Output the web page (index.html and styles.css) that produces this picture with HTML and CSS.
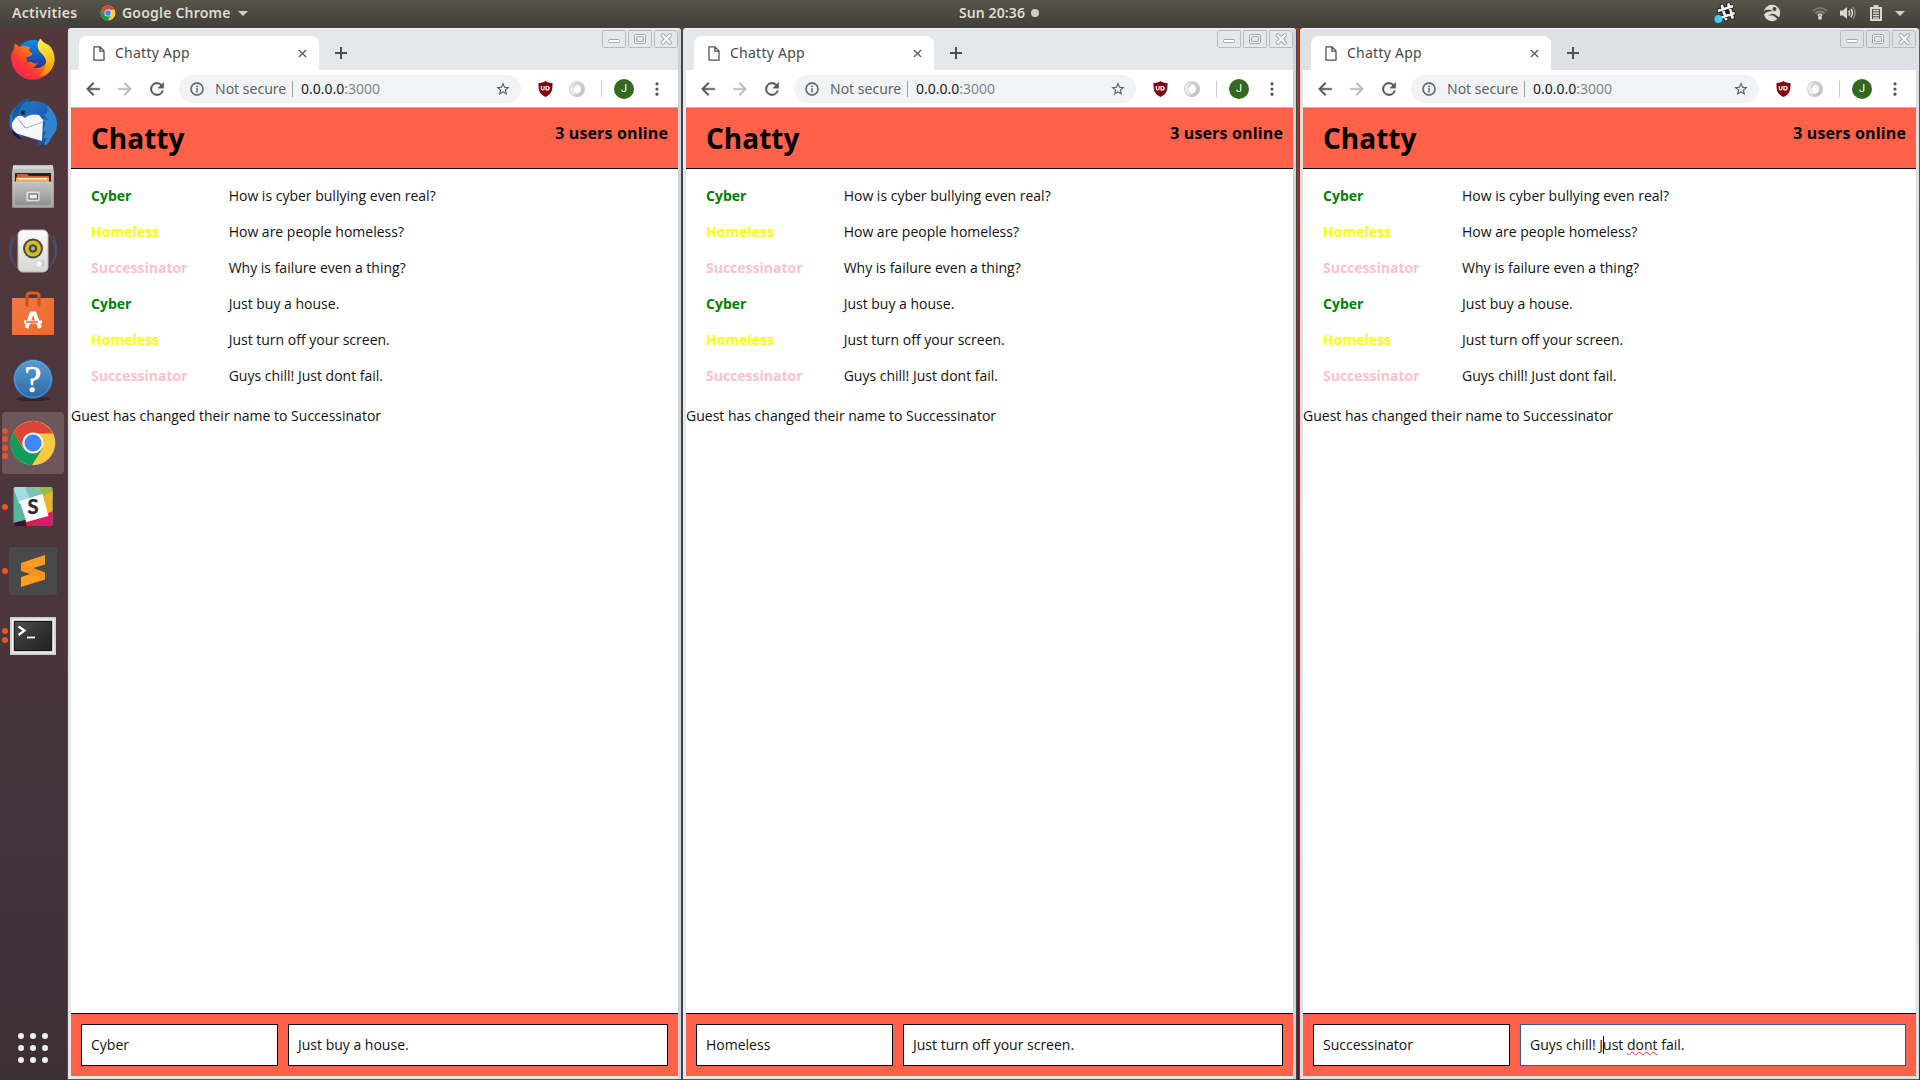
FILE: index.html
```html
<!DOCTYPE html>
<html lang="en">
<head>
<meta charset="utf-8">
<title>Chatty App</title>
<link rel="stylesheet" href="styles.css">
</head>
<body>
<svg class="defs" width="0" height="0">
  <defs>
    <linearGradient id="gFox" x1="0" y1="1" x2="1" y2="0"><stop offset="0" stop-color="#f5156c"/><stop offset=".35" stop-color="#ff3b30"/><stop offset=".65" stop-color="#ff9a0a"/><stop offset="1" stop-color="#ffe226"/></linearGradient>
    <linearGradient id="gTail" x1="0" y1="0" x2="0" y2="1"><stop offset="0" stop-color="#fff44f"/><stop offset=".5" stop-color="#ffc81e"/><stop offset="1" stop-color="#ff8a0a"/></linearGradient>
    <linearGradient id="gGlobe" x1="0" y1="0" x2="0" y2="1"><stop offset="0" stop-color="#0a8df0"/><stop offset="1" stop-color="#2a1f7a"/></linearGradient>
    <linearGradient id="gBird" x1="0" y1="0" x2="1" y2="1"><stop offset="0" stop-color="#1d84c9"/><stop offset=".5" stop-color="#1f62b8"/><stop offset="1" stop-color="#1b4a9c"/></linearGradient>
    <linearGradient id="gGrey" x1="0" y1="0" x2="0" y2="1"><stop offset="0" stop-color="#c4c4c4"/><stop offset="1" stop-color="#8f8f8f"/></linearGradient>
    <linearGradient id="gWhite" x1="0" y1="0" x2="0" y2="1"><stop offset="0" stop-color="#fbfbfb"/><stop offset="1" stop-color="#d6d6d4"/></linearGradient>
    <linearGradient id="gBag" x1="0" y1="0" x2="1" y2="1"><stop offset="0" stop-color="#ee7b45"/><stop offset="1" stop-color="#f0672a"/></linearGradient>
    <linearGradient id="gHelp" x1="0" y1="0" x2="0" y2="1"><stop offset="0" stop-color="#5b9bd0"/><stop offset="1" stop-color="#2b68a6"/></linearGradient>
    <linearGradient id="gTerm" x1="0" y1="0" x2="1" y2="1"><stop offset="0" stop-color="#505050"/><stop offset=".5" stop-color="#333"/><stop offset="1" stop-color="#222"/></linearGradient>
    <linearGradient id="gRing" x1="0" y1="0" x2="1" y2="1"><stop offset="0" stop-color="#dcdcdc"/><stop offset="1" stop-color="#bdbdbd"/></linearGradient>
    <symbol id="chrome" viewBox="0 0 48 48">
      <circle cx="24" cy="24" r="22.3" fill="#fbc93d"/>
      <path d="M4.7 12.8A22.3 22.3 0 0 0 23 46.2L33.6 29.2 24 24 14 29.5Z" fill="#0f9d58"/>
      <path d="M4.7 12.8 14.3 29.5 24 14.500H43.8A22.3 22.3 0 0 0 4.700 12.800Z" fill="#db4437"/>
      <circle cx="24" cy="24" r="10.6" fill="#f4f4f4"/><circle cx="24" cy="24" r="8.5" fill="#4285f4"/>
    </symbol>
    <symbol id="doc" viewBox="0 0 12 15"><path d="M1 .9h6l4 4v9.2H1ZM6.9 1v4.1H11" fill="none" stroke="#505357" stroke-width="1.3"/></symbol>
    <symbol id="cross" viewBox="0 0 10 10"><path d="m1 1 8 8M9 1 1 9" stroke="#5f6368" stroke-width="1.6"/></symbol>
    <symbol id="plus" viewBox="0 0 12 12"><path d="M6 0v12M0 6h12" stroke="#4c5054" stroke-width="2"/></symbol>
    <symbol id="back" viewBox="0 0 24 24"><path d="M20 11H7.8l5.6-5.6L12 4l-8 8 8 8 1.4-1.4L7.8 13H20Z" stroke-width=".5"/></symbol>
    <symbol id="reload" viewBox="0 0 24 24"><path d="M17.65 6.35A8 8 0 1 0 19.73 14h-2.08A6 6 0 1 1 12 6c1.66 0 3.14.69 4.22 1.78L13 11h7V4Z" fill="#54585c" stroke="#54585c" stroke-width=".5"/></symbol>
    <symbol id="info" viewBox="0 0 24 24"><path d="M11 17h2v-6h-2ZM12 2a10 10 0 1 0 0 20 10 10 0 0 0 0-20Zm0 18a8 8 0 1 1 0-16 8 8 0 0 1 0 16ZM11 9h2V7h-2Z" fill="#5f6368" stroke="#5f6368" stroke-width=".4"/></symbol>
    <symbol id="star" viewBox="0 0 24 24"><path d="m22 9.24-7.19-.62L12 2 9.19 8.63 2 9.24l5.46 4.73L5.82 21 12 17.27 18.18 21l-1.63-7.03ZM12 15.4l-3.76 2.27 1-4.28-3.32-2.88 4.38-.38L12 6.1l1.71 4.04 4.38.38-3.32 2.88 1 4.28Z" fill="#54585c"/></symbol>
    <symbol id="shield" viewBox="0 0 15 16"><path d="M7.5 0C9.5 1.5 12 2 14.5 2 14.6 9 14 13 7.5 16 1 13 .4 9 .5 2 3 2 5.500 1.500 7.500 0Z" fill="#800610"/><path d="M3.300 5v2.500q0 1.500 1.400 1.500t1.400-1.500V5M8 5.500v3.500h1.200q2 0 2-1.750t-2-1.750Z" fill="none" stroke="#fff" stroke-width="1.200"/></symbol>
    <symbol id="ring" viewBox="0 0 16 16"><circle cx="8" cy="8" r="8" fill="url(#gRing)"/><path d="M8.500 3.500c2.500 1 3.500 2.500 3.500 4.500s-1.500 4-4.500 5C5.500 12 4.500 10.500 4.500 8.500S6 4.500 8.500 3.500Z" fill="#fff"/><path d="M1 8a7 7 0 0 1 6-6.800C4 3 3.500 5 4 8s1 5 3 6.800A7 7 0 0 1 1 8Z" fill="#ececec"/></symbol>
    <symbol id="dots" viewBox="0 0 4 14"><circle cx="2" cy="1.800" r="1.600" fill="#505357"/><circle cx="2" cy="7" r="1.600" fill="#505357"/><circle cx="2" cy="12.200" r="1.600" fill="#505357"/></symbol>
    <symbol id="wmin" viewBox="0 0 24 18"><rect x=".5" y=".5" width="23" height="17" rx="1" fill="none" stroke="#b7bbbf"/><rect x="6.500" y="9.500" width="11" height="3" rx="1" fill="#fff" stroke="#a5a8ab"/></symbol>
    <symbol id="wmax" viewBox="0 0 24 18"><rect x=".5" y=".5" width="23" height="17" rx="1" fill="none" stroke="#b7bbbf"/><rect x="6.500" y="4.500" width="11" height="9" rx="1.500" fill="#f8f8f8" stroke="#a5a8ab"/><rect x="8.500" y="6.500" width="7" height="5" rx=".5" fill="#e4e7ea" stroke="#a5a8ab"/></symbol>
    <symbol id="wclose" viewBox="0 0 24 18"><path d="M.5 1.500q0-1 1-1H20q3.500 0 3.500 3.500v12.500q0 1-1 1h-21q-1 0-1-1Z" fill="none" stroke="#b7bbbf"/><path d="m8.700 5.200 7.200 7.600m0-7.600-7.200 7.600" stroke="#a5a8ab" stroke-width="4.200" stroke-linecap="round"/><path d="m8.700 5.200 7.200 7.600m0-7.600-7.200 7.600" stroke="#fff" stroke-width="2.200" stroke-linecap="round"/></symbol>
  </defs>
</svg>

<header class="topbar">
  <span class="activities">Activities</span>
  <svg class="app-icon"><use href="#chrome"/></svg>
  <span class="app-name">Google Chrome</span>
  <i class="caret"></i>
  <div class="clock"><span>Sun 20:36</span><i></i></div>
  <div class="tray">
    <svg class="tray-slack" width="22" height="22" viewBox="0 0 22 22"><g stroke="#222" stroke-width="4.600" stroke-linecap="round"><path d="m8 4 4 13M14.500 2.500l4 13M5 8.500l13-4M7 15.500l12.500-4"/></g><g stroke="#f5f5f5" stroke-width="2.800" stroke-linecap="round"><path d="m8 4 4 13M14.500 2.500l4 13M5 8.500l13-4M7 15.500l12.500-4"/></g><path d="m10.800 8.200 4-1.200 1.300 4-4 1.200Z" fill="#222"/><circle cx="4.500" cy="17" r="4" fill="#38d0f5"/></svg>
    <svg class="tray-cam" width="18" height="18" viewBox="0 0 18 18"><circle cx="9" cy="9" r="8.200" fill="#dedcd6"/><path d="M.5 7.500C3 5.500 5.500 4.800 8 6l2 1.500C6.500 6.800 3 8 1 10.500ZM5 12q4-3.500 7-1.500l5 3.500-1.500 2-4-3.500Q8.500 10.500 5 12Z" fill="#45443d"/><circle cx="11.500" cy="5" r="2" fill="#45443d"/></svg>
    <svg class="tray-wifi" width="16" height="14" viewBox="0 0 16 14"><g fill="none" stroke-width="1.800"><path d="M1 5.200C5 .7 11 .7 15 5.200" stroke="#77756f"/><path d="M3.500 7.500C6 4.600 10 4.600 12.500 7.500" stroke="#8d8b85"/><path d="M5.800 9.500q2.200-2.200 4.400 0" stroke="#d9d7d2"/></g><circle cx="8" cy="11.800" r="2" fill="#d9d7d2"/></svg>
    <svg class="tray-vol" width="16" height="14" viewBox="0 0 16 14"><path d="M0 4.500h3L7 1v12L3 9.500H0Z" fill="#d9d7d2"/><path d="M8.800 4.500q1.700 2.500 0 5M10.800 2.800q3.200 4.200 0 8.400" stroke="#d9d7d2" stroke-width="1.500" fill="none"/><path d="M12.800 1q4.500 6 0 12" stroke="#85837d" stroke-width="1.500" fill="none"/></svg>
    <svg class="tray-bat" width="12" height="16" viewBox="0 0 12 16"><path d="M3.500 0h5v2H12v14H0V2h3.500Z" fill="#d9d7d2"/><path d="M2 4h8v10H2Z" fill="#4b4a43"/><path d="M3 5.500h6M3 8h6M3 10.500h6M3 13h6" stroke="#d9d7d2" stroke-width="1.300"/></svg>
    <i class="caret"></i>
  </div>
</header>

<div class="desktop">
  <nav class="dock">
    <div class="dock-item"><svg viewBox="0 0 48 48"><circle cx="24" cy="22" r="17" fill="url(#gGlobe)"/><path d="M6 8.500Q9 11 11 12q4-2 10 .5l-1.500 3.500q3 .5 4 3.500-2 2-6 2.500 0 3 1 5.500 3-1.500 5 0t5.500.5q-1.500 3-5.500 4.200 8 2.600 13-3.700Q40 21 32 14q-4-5-1-10.500Q33 7 40 10q6 6 5.700 15.500A21.800 21.800 0 0 1 2.500 26Q1 19 5 14 5 11 6 8.500Z" fill="url(#gFox)"/><path d="M31.500 3.500Q34 8 40 11.500 46 18 45 28 42 40 30 41q8-7 7-15-1-5-6-9-5-7 .5-13.500Z" fill="url(#gTail)"/></svg></div>
    <div class="dock-item"><svg viewBox="0 0 48 48"><path d="M21 0q-3 2-3 3Q30 0 38 6q9 7 10 18 .5 8-6 15-1 4-5 7l-2-1-7 2 2-5L13 37q-3 0-3 3-6-4-9-12Q-2 14 8 7 13 0 21 0Z" fill="url(#gBird)"/><path d="M21 0q-9 5-11 13l-2 9Q-1 19 8 7 13 0 21 0Z" fill="#165aa0"/><path d="M38 6q9 7 10 18 .5 8-6 15-1 4-5 7l-2-1 3-6-4 1 3-8-3 1 2-9-3-4 6 1-4-6q5 0 3-9Z" fill="#3283cd"/><path d="M7 18q5-3 9 1 5-5 14-3l4 5-1 21L6 34Q2 28 3 24Z" fill="#f7f7f7"/><path d="m7 18 10 11 17-6M11 22l5 7" fill="none" stroke="#aaa" stroke-width=".9"/><path d="M3 30q0 8 10 11l-3-4Z" fill="#241456"/><circle cx="14" cy="13.500" r="2.500" fill="#123c70"/><circle cx="14" cy="13.500" r="1" fill="#111"/></svg></div>
    <div class="dock-item"><svg viewBox="0 0 48 48"><path d="M4 3q0-1 1-1h38q1 0 1 1l1 6v36H3V9Z" fill="url(#gGrey)"/><path d="M4 3h40v3H4Z" fill="#d5d5d5"/><path d="M6 10h36v9H6Z" fill="#2c2622"/><path d="M8 11h10l2 2h20v6H8Z" fill="#d55f20"/><path d="M7 14.500h33V19H7Z" fill="#f4a257"/><path d="M9 15h29v1.500H9Z" fill="#fff3e0"/><path d="M5 19h38v24H5Z" fill="url(#gGrey)" stroke="#ccc" stroke-width=".8"/><rect x="17" y="28" width="14" height="10.500" rx="1.500" fill="#dedede" stroke="#aaa"/><rect x="20" y="31" width="8.500" height="5" fill="#ededed" stroke="#555"/></svg></div>
    <div class="dock-item"><svg viewBox="0 0 48 48"><g fill="none" stroke="#4c4c68" stroke-width="1.500"><path d="M8 8q-12 15-1 32M4 8q-7 15 0 28M40 8q12 15 1 32M44 8q7 15 0 28"/></g><rect x="9" y="3" width="30" height="42" rx="5" fill="url(#gWhite)" stroke="#bcbcbc"/><circle cx="24" cy="21.500" r="10" fill="#494844"/><circle cx="24" cy="21.500" r="8" fill="#d8bb20"/><circle cx="24" cy="21.500" r="4.300" fill="#4f502f"/><circle cx="24" cy="21.500" r="2" fill="#a2b2c2"/><circle cx="30" cy="37" r="3.500" fill="#f5f5f5" stroke="#ccc"/><path d="M34 33v7" stroke="#bbb"/></svg></div>
    <div class="dock-item"><svg viewBox="0 0 48 48"><path d="M18 14V5q0-3 3-3h6q3 0 3 3v9" fill="none" stroke="#dc5924" stroke-width="3"/><path d="M3 7h42v37H3Z" fill="url(#gBag)"/><path d="M18 7v7M30 7v7" stroke="#c8501d" stroke-width="3" stroke-linecap="round"/><path d="m17.500 37 5-14.500h3l5.500 14.500" fill="none" stroke="#fff" stroke-width="4"/><rect x="15" y="29.500" width="18" height="3" fill="#fff"/><path d="M17 31h12" stroke="#ef6a2f" stroke-width="1.600"/></svg></div>
    <div class="dock-item"><svg viewBox="0 0 48 48"><ellipse cx="24" cy="44" rx="17" ry="2" fill="#33252b"/><circle cx="24" cy="24" r="19.500" fill="url(#gHelp)" stroke="#24588f"/><circle cx="24" cy="24" r="18.300" fill="none" stroke="#76a9d6" stroke-width=".7"/><text x="24" y="37" text-anchor="middle" class="help-mark">?</text></svg></div>
    <div class="dock-item active"><span class="pips"><i></i><i></i><i></i><i></i></span><svg><use href="#chrome"/></svg></div>
    <div class="dock-item"><span class="pips"><i></i></span><svg viewBox="0 0 48 48"><clipPath id="cs"><rect x="4.500" y="4" width="39" height="39" rx="2"/></clipPath><g clip-path="url(#cs)"><path d="M0 0h48v48H0Z" fill="#54b898"/><path d="M4 4h27l3 9-24 8Z" fill="#a3dce2"/><path d="M16 4h14l3 10-12 3Z" fill="#7fc3b0"/><path d="M30 4h14v12l-10 3Z" fill="#98bd47"/><path d="m33 13 11-5v22l-7 2Z" fill="#ecb32e"/><path d="m37 31 7-3v16H30l-2-8Z" fill="#e01765"/><path d="m16 37 12-4 4 11H16Z" fill="#d91c50"/><path d="M4 40l12-3 2 8H4Z" fill="#3b1530"/><path d="m10.500 18 23-7 6 22-22 6Z" fill="#fff"/></g><text x="24" y="31" text-anchor="middle" class="slack-mark">S</text></svg></div>
    <div class="dock-item"><span class="pips"><i></i></span><svg viewBox="0 0 48 48"><rect width="48" height="48" rx="2" fill="#494949"/><path d="m12 16 24-8v9.500l-15 4.500L36 27v5.500l-24 7.500V30l14-4.500L12 21Z" fill="#ff9c22"/><path d="m12 16 24 9.500V32L12 24Z" fill="#f7931e"/></svg></div>
    <div class="dock-item"><span class="pips"><i></i><i></i></span><svg viewBox="0 0 48 48"><path d="M1 6h46v38H1Z" fill="#d3d3d1"/><path d="M3 8h42v34H3Z" fill="#f0f0ef"/><path d="M4.500 9.500h39v31h-39Z" fill="#999"/><path d="M5.500 10.500h37v29h-37Z" fill="url(#gTerm)" stroke="#191919"/><path d="m9.500 15.500 6 4-6 4.500" fill="none" stroke="#fff" stroke-width="2.200"/><path d="M18 26.500h8" stroke="#fff" stroke-width="1.800"/></svg></div>
    <div class="apps"><i></i><i></i><i></i><i></i><i></i><i></i><i></i><i></i><i></i></div>
  </nav>

  <section class="window w1">
    <div class="tabs">
      <div class="tab"><svg class="doc"><use href="#doc"/></svg><span>Chatty App</span><svg class="x"><use href="#cross"/></svg></div>
      <svg class="plus"><use href="#plus"/></svg>
      <div class="controls"><svg><use href="#wmin"/></svg><svg><use href="#wmax"/></svg><svg><use href="#wclose"/></svg></div>
    </div>
    <div class="toolbar">
      <svg class="nav"><use href="#back"/></svg><svg class="nav fwd"><use href="#back"/></svg><svg class="nav"><use href="#reload"/></svg>
      <div class="omnibox"><svg class="info"><use href="#info"/></svg><span class="secure">Not secure</span><span class="url">0.0.0.0<em>:3000</em></span><svg class="star"><use href="#star"/></svg></div>
      <svg class="shield"><use href="#shield"/></svg><svg class="ring"><use href="#ring"/></svg><i class="sep"></i><b class="avatar">J</b><svg class="dots"><use href="#dots"/></svg>
    </div>
    <div class="page">
      <div class="navbar"><h1>Chatty</h1><p>3 users online</p></div>
      <main>
        <div class="message"><b class="green">Cyber</b><span>How is cyber bullying even real?</span></div>
        <div class="message"><b class="yellow">Homeless</b><span>How are people homeless?</span></div>
        <div class="message"><b class="pink">Successinator</b><span>Why is failure even a thing?</span></div>
        <div class="message"><b class="green">Cyber</b><span>Just buy a house.</span></div>
        <div class="message"><b class="yellow">Homeless</b><span>Just turn off your screen.</span></div>
        <div class="message"><b class="pink">Successinator</b><span>Guys chill! Just dont fail.</span></div>
        <div class="system">Guest has changed their name to Successinator</div>
      </main>
      <footer><div class="field name">Cyber</div><div class="field text">Just buy a house.</div></footer>
    </div>
  </section>

  <section class="window w2">
    <div class="tabs">
      <div class="tab"><svg class="doc"><use href="#doc"/></svg><span>Chatty App</span><svg class="x"><use href="#cross"/></svg></div>
      <svg class="plus"><use href="#plus"/></svg>
      <div class="controls"><svg><use href="#wmin"/></svg><svg><use href="#wmax"/></svg><svg><use href="#wclose"/></svg></div>
    </div>
    <div class="toolbar">
      <svg class="nav"><use href="#back"/></svg><svg class="nav fwd"><use href="#back"/></svg><svg class="nav"><use href="#reload"/></svg>
      <div class="omnibox"><svg class="info"><use href="#info"/></svg><span class="secure">Not secure</span><span class="url">0.0.0.0<em>:3000</em></span><svg class="star"><use href="#star"/></svg></div>
      <svg class="shield"><use href="#shield"/></svg><svg class="ring"><use href="#ring"/></svg><i class="sep"></i><b class="avatar">J</b><svg class="dots"><use href="#dots"/></svg>
    </div>
    <div class="page">
      <div class="navbar"><h1>Chatty</h1><p>3 users online</p></div>
      <main>
        <div class="message"><b class="green">Cyber</b><span>How is cyber bullying even real?</span></div>
        <div class="message"><b class="yellow">Homeless</b><span>How are people homeless?</span></div>
        <div class="message"><b class="pink">Successinator</b><span>Why is failure even a thing?</span></div>
        <div class="message"><b class="green">Cyber</b><span>Just buy a house.</span></div>
        <div class="message"><b class="yellow">Homeless</b><span>Just turn off your screen.</span></div>
        <div class="message"><b class="pink">Successinator</b><span>Guys chill! Just dont fail.</span></div>
        <div class="system">Guest has changed their name to Successinator</div>
      </main>
      <footer><div class="field name">Homeless</div><div class="field text">Just turn off your screen.</div></footer>
    </div>
  </section>

  <section class="window w3">
    <div class="tabs">
      <div class="tab"><svg class="doc"><use href="#doc"/></svg><span>Chatty App</span><svg class="x"><use href="#cross"/></svg></div>
      <svg class="plus"><use href="#plus"/></svg>
      <div class="controls"><svg><use href="#wmin"/></svg><svg><use href="#wmax"/></svg><svg><use href="#wclose"/></svg></div>
    </div>
    <div class="toolbar">
      <svg class="nav"><use href="#back"/></svg><svg class="nav fwd"><use href="#back"/></svg><svg class="nav"><use href="#reload"/></svg>
      <div class="omnibox"><svg class="info"><use href="#info"/></svg><span class="secure">Not secure</span><span class="url">0.0.0.0<em>:3000</em></span><svg class="star"><use href="#star"/></svg></div>
      <svg class="shield"><use href="#shield"/></svg><svg class="ring"><use href="#ring"/></svg><i class="sep"></i><b class="avatar">J</b><svg class="dots"><use href="#dots"/></svg>
    </div>
    <div class="page">
      <div class="navbar"><h1>Chatty</h1><p>3 users online</p></div>
      <main>
        <div class="message"><b class="green">Cyber</b><span>How is cyber bullying even real?</span></div>
        <div class="message"><b class="yellow">Homeless</b><span>How are people homeless?</span></div>
        <div class="message"><b class="pink">Successinator</b><span>Why is failure even a thing?</span></div>
        <div class="message"><b class="green">Cyber</b><span>Just buy a house.</span></div>
        <div class="message"><b class="yellow">Homeless</b><span>Just turn off your screen.</span></div>
        <div class="message"><b class="pink">Successinator</b><span>Guys chill! Just dont fail.</span></div>
        <div class="system">Guest has changed their name to Successinator</div>
      </main>
      <footer><div class="field name">Successinator</div><div class="field text focused">Guys chill! J<i class="cursor"></i>ust <u>dont</u> fail.</div></footer>
    </div>
  </section>
</div>
</body>
</html>
```
FILE: styles.css
```css
* { box-sizing: border-box; }
body {
  margin: 0;
  width: 1920px;
  height: 1080px;
  overflow: hidden;
  display: flex;
  flex-direction: column;
  font-family: "Noto Sans", "Open Sans", sans-serif;
  background: #3f3036;
}
.defs { position: absolute; }
svg { display: block; flex: none; }

/* Top panel */
.topbar {
  height: 28px;
  flex: none;
  display: grid;
  grid-template-columns: auto auto auto auto 1fr auto;
  align-items: center;
  padding: 0 15px 2px 12px;
  background: linear-gradient(#57534a, #403f39);
  color: #dfdbd2;
  font-weight: 600;
  font-size: 14px;
  line-height: 24px;
}
.activities { width: 88px; letter-spacing: .3px; }
.app-icon { width: 16px; height: 16px; }
.app-name { margin-left: 6px; width: 111px; letter-spacing: .2px; white-space: nowrap; }
.caret { border: 5px solid transparent; border-top-color: #d3d0c9; border-bottom: 0; }
.app-name + .caret { margin-left: 5px; }
.clock { display: flex; align-items: center; margin-left: 711px; }
.clock span { width: 67px; letter-spacing: .1px; white-space: nowrap; }
.clock i { width: 8px; height: 8px; border-radius: 50%; background: #d0cdc7; margin-left: 5px; }
.tray { display: flex; align-items: center; }
.tray-cam { margin-left: 27px; }
.tray-wifi { margin-left: 31px; }
.tray-vol { margin-left: 12px; }
.tray-bat { margin-left: 14px; }
.tray .caret { margin-left: 13px; }

.desktop {
  flex: 1;
  display: flex;
  min-height: 0;
  background: linear-gradient(#b03a1c, #6d1228);
}

/* Dock */
.dock {
  width: 68px;
  flex: none;
  display: flex;
  flex-direction: column;
  gap: 2.05px;
  padding-left: 2px;
  background: linear-gradient(#53373b, #4b363c 50%, #41323a 85%, #3c3034);
  box-shadow: inset -1px 0 #4a4a4c;
}
.dock-item {
  width: 62px;
  height: 62px;
  flex: none;
  display: grid;
  grid-template: 1fr / 7px 48px 7px;
  align-items: center;
}
.dock-item > svg { width: 48px; height: 48px; grid-column: 2; grid-row: 1; }
.dock-item.active { background: #6d575d; border-radius: 4px; }
.pips { display: grid; gap: 2.5px; grid-column: 1; grid-row: 1; }
.pips i { width: 6px; height: 6px; border-radius: 50%; background: #e95420; }
.help-mark { font: 38px "Liberation Serif", serif; fill: #fff; stroke: #fff; stroke-width: .6px; }
.slack-mark { font: bold 20px "Lato", sans-serif; fill: #2b2b35; stroke: #2b2b35; stroke-width: .5px; }
.apps {
  margin: auto 0 17px 16px;
  display: grid;
  grid-template-columns: repeat(3, 6px);
  gap: 6px;
}
.apps i { width: 6px; height: 6px; border-radius: 50%; background: #f2f0ef; }

/* Browser windows */
.window {
  --frame: #e4e8eb;
  display: flex;
  flex-direction: column;
  flex: none;
  width: 613px;
  padding: 0 3px 3px;
  background: var(--frame);
  border-bottom: 1px solid #55555a;
  border-radius: 4px 4px 0 0;
}
.w1 { box-shadow: inset 0 1px #f1f3f4, inset -3px 0 #d0d3d6, 2px 0 #424349; }
.w2 { margin-left: 2px; box-shadow: inset 0 1px #f1f3f4, inset -3px 0 #d0d3d6, 1px 0 #424349; }
.w3 { --frame: #dde1e6; margin-left: 4px; width: 619px; box-shadow: inset 0 1px #f1f3f4, -1px 0 #424349; }
.tabs { height: 42px; flex: none; display: flex; align-items: flex-end; }
.tab {
  margin-left: 8px;
  width: 240px;
  height: 34px;
  border-radius: 8px 8px 0 0;
  background: #fff;
  display: flex;
  align-items: center;
  padding: 0 12px 0 14px;
  color: #45494d;
  font-size: 14px;
}
.doc { width: 12px; height: 15px; }
.tab span { flex: 1; margin-left: 10px; letter-spacing: .25px; padding-bottom: 2px; }
.x { width: 9px; height: 9px; }
.plus { width: 12px; height: 12px; margin: 0 0 11px 16px; }
.controls { display: flex; gap: 2px; margin-left: auto; align-self: flex-start; padding-top: 2px; }
.controls svg { width: 24px; height: 18px; }
.toolbar {
  height: 38px;
  flex: none;
  display: flex;
  align-items: center;
  background: #fff;
  border-bottom: 1px solid #b5b5b5;
  padding: 0 19px 0 12px;
}
.nav { width: 20px; height: 20px; margin-right: 12px; fill: #54585c; stroke: #54585c; }
.fwd { transform: scaleX(-1); fill: #b9bbbd; stroke: #b9bbbd; }
.omnibox {
  flex: 1;
  height: 28px;
  border-radius: 14px;
  background: #f1f3f4;
  display: flex;
  align-items: center;
  padding: 0 10px;
  font-size: 14px;
  color: #5f6368;
}
.info { width: 16px; height: 16px; }
.secure { margin-left: 10px; width: 78px; border-right: 1px solid #9b9ea2; line-height: 16px; white-space: nowrap; }
.url { margin-left: 8px; flex: 1; color: #202124; }
.url em { font-style: normal; color: #80868b; }
.star { width: 16px; height: 16px; }
.shield { width: 15px; height: 16px; margin-left: 17px; }
.ring { width: 16px; height: 16px; margin-left: 16px; }
.sep { width: 1px; height: 16px; background: #c8cacc; margin-left: 16px; }
.avatar {
  width: 20px; height: 20px; border-radius: 50%;
  margin-left: 12px; background: #33691e; color: #fff;
  font: 11px/20px Roboto, sans-serif; text-align: center;
}
.dots { width: 4px; height: 14px; margin-left: 21px; }

/* Chat page */
.page {
  flex: 1;
  display: flex;
  flex-direction: column;
  background: #fff;
  color: #111;
  font: 14px/20px "Open Sans", "Noto Sans", sans-serif;
}
.navbar {
  height: 61px;
  flex: none;
  display: flex;
  justify-content: space-between;
  background: #ff6249;
  border-bottom: 1px solid #000;
  padding: 0 10px 0 20px;
  color: #000;
}
.navbar h1 { margin: 10px 0 0; font-size: 28px; line-height: 40px; }
.navbar p { margin: 13px 0 0; font-size: 16px; line-height: 24px; font-weight: 700; letter-spacing: .15px; }
main { flex: 1; padding-top: 9px; }
.message { display: flex; height: 36px; line-height: 36px; padding-left: 20px; }
.message b { width: 23.45%; }
.green { color: green; }
.yellow { color: yellow; }
.pink { color: pink; }
.system { margin-top: 12px; }
footer {
  height: 63px;
  flex: none;
  display: flex;
  gap: 10px;
  padding: 10px;
  background: #ff6249;
  border-top: 1px solid #000;
}
.field { height: 42px; border: 1px solid #000; background: #fff; padding: 0 9px; line-height: 40px; white-space: pre; }
.name { width: 197px; }
.text { flex: 1; }
.focused { border-color: #2f5a9c; box-shadow: 0 0 1px #5a7bb0; }
.cursor { display: inline-block; width: 1px; height: 18px; margin-right: -1px; vertical-align: -4px; background: #000; }
.text u { text-decoration: underline wavy #e33 1px; text-underline-offset: 1px; text-decoration-skip-ink: none; }
```
